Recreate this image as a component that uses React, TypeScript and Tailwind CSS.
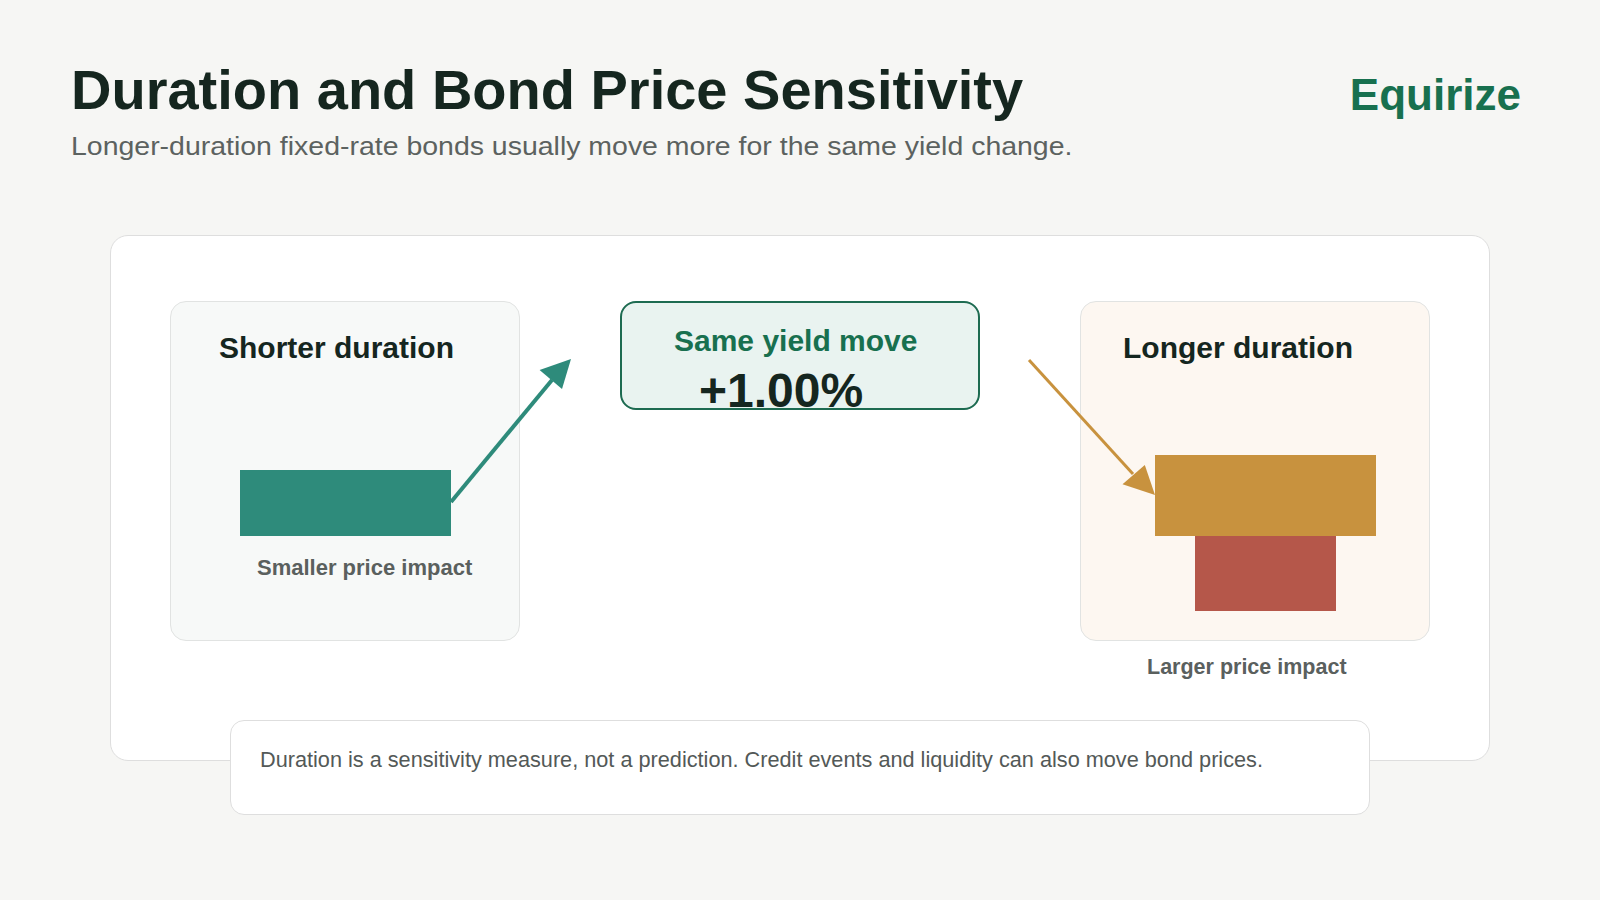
const Panel = ({
  title,
  tone,
  titleInset,
  children,
}: {
  title: string;
  tone: string;
  titleInset: string;
  children: React.ReactNode;
}) => (
  <div className={`flex h-[340px] w-[350px] shrink-0 flex-col rounded-[16px] border border-[#e1e3e2] ${tone}`}>
    <h3 className={`pt-[31px] text-[30px] font-bold leading-none text-[#15261f] ${titleInset}`}>{title}</h3>
    {children}
  </div>
);

export default function App() {
  return (
    <div className="min-h-screen w-full bg-[#f6f6f4] pb-10 font-['Liberation_Sans',Arial,sans-serif]">
      {/* Header */}
      <header className="flex items-start justify-between pl-[71px] pr-[79px] pt-[62px]">
        <div>
          <h1 className="text-[56px] font-bold leading-none text-[#15261f]">Duration and Bond Price Sensitivity</h1>
          <p className="mt-[14.5px] origin-left scale-x-[1.074] text-[26.5px] leading-none text-[#5c6260]">
            Longer-duration fixed-rate bonds usually move more for the same yield change.
          </p>
        </div>
        <div className="mt-[10.5px] text-[44px] font-bold leading-none text-[#18704f]">Equirize</div>
      </header>

      {/* Diagram card */}
      <section className="relative mx-auto mt-[76px] h-[526px] w-[1380px] rounded-[18px] border border-[#dedede] bg-white">
        <div className="flex gap-[100px] px-[59px] pt-[65px]">
          <Panel title="Shorter duration" tone="bg-[#f7f9f8]" titleInset="pl-[48px]">
            <div className="ml-[69px] mt-[107px] h-[66px] w-[211px] bg-[#2e8b7b]" />
            <span className="ml-[86px] mt-[21px] text-[22px] font-bold leading-none text-[#5a605e]">Smaller price impact</span>
          </Panel>

          <div className="flex h-[109px] w-[360px] shrink-0 flex-col overflow-hidden rounded-[16px] border-2 border-[#1d6b51] bg-[#e9f3f0]">
            <span className="pl-[52px] pt-[23px] text-[30px] font-bold leading-none text-[#18704f]">Same yield move</span>
            <span className="mt-[11px] pl-[77px] text-[48px] font-bold leading-none text-[#15261f]">+1.00%</span>
          </div>

          <div className="flex w-[350px] shrink-0 flex-col">
            <Panel title="Longer duration" tone="bg-[#fdf7f1]" titleInset="pl-[42px]">
              <div className="ml-[74px] mt-[92px] h-[81px] w-[221px] bg-[#c8923e]" />
              <div className="ml-[114px] h-[75px] w-[141px] bg-[#b5574a]" />
            </Panel>
            <span className="ml-[67px] mt-[16px] text-[21.5px] font-bold leading-none text-[#5a605e]">Larger price impact</span>
          </div>
        </div>

        {/* Arrows */}
        <svg className="pointer-events-none absolute left-0 top-0" width="1378" height="524" viewBox="0 0 1378 524">
          <line x1="340" y1="266" x2="441" y2="144" stroke="#2e8b7b" strokeWidth="4" />
          <polygon points="460,123 428.6,134 451,153" fill="#2e8b7b" />
          <line x1="918" y1="124" x2="1022" y2="238" stroke="#c8923e" strokeWidth="3" />
          <polygon points="1044,259 1011.5,248.3 1033.8,229" fill="#c8923e" />
        </svg>
      </section>

      {/* Note */}
      <div className="relative z-10 mx-auto -mt-[41px] h-[95px] w-[1140px] rounded-[14px] border border-[#dedede] bg-white pl-[29px] pt-[28px]">
        <p className="text-[21.7px] leading-none text-[#535957]">
          Duration is a sensitivity measure, not a prediction. Credit events and liquidity can also move bond prices.
        </p>
      </div>
    </div>
  );
}
